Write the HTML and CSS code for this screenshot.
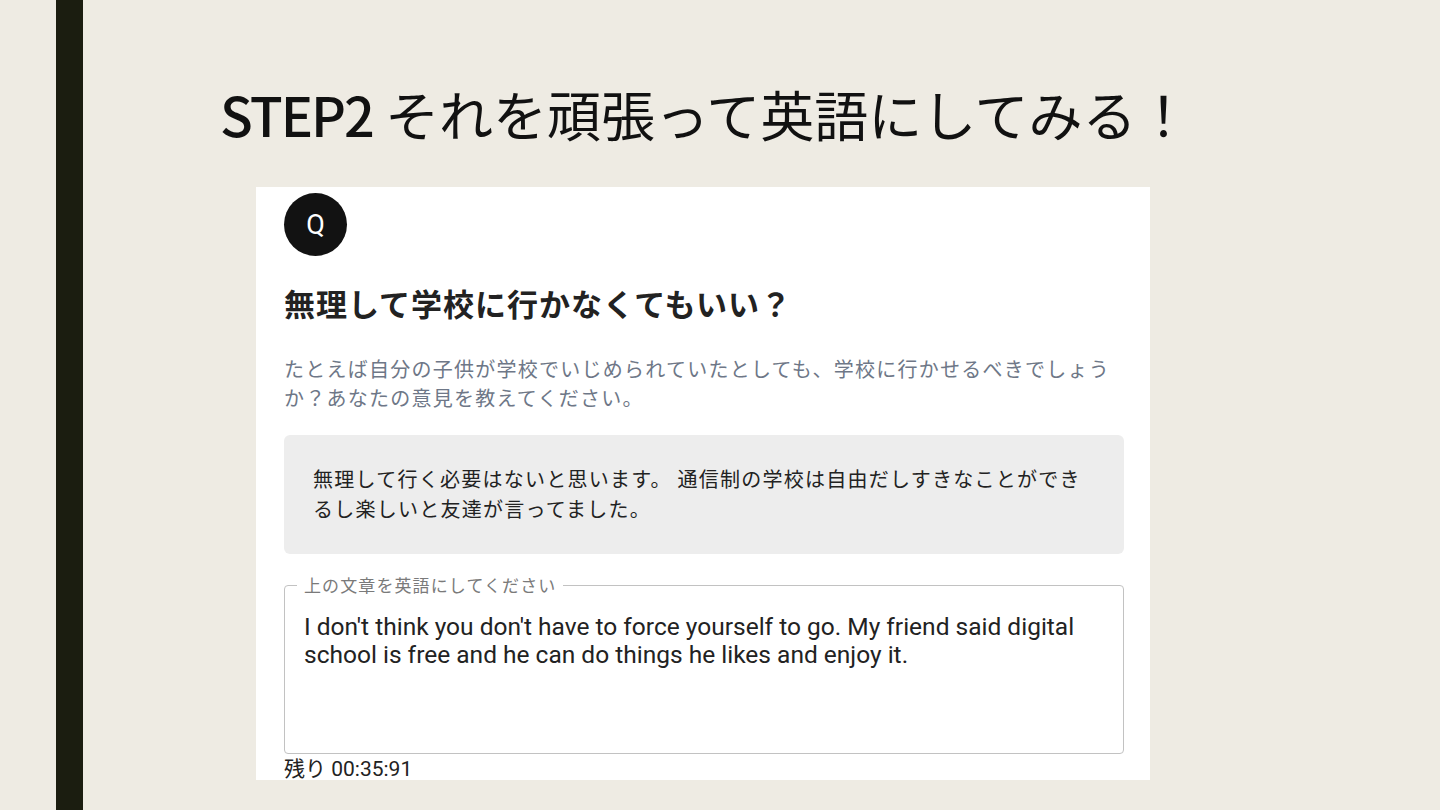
FILE: index.html
```html
<!DOCTYPE html>
<html lang="ja">
<head>
<meta charset="utf-8">
<title>STEP2</title>
<link rel="stylesheet" href="styles.css">
</head>
<body>
<div class="slide">
  <div class="bar"></div>
  <main class="content">
    <h1 class="title"><span class="step">STEP2</span> それを頑張って英語にしてみる！</h1>
    <section class="card">
      <div class="q-badge">Q</div>
      <h2 class="question">無理して学校に行かなくてもいい？</h2>
      <p class="desc">たとえば自分の子供が学校でいじめられていたとしても、学校に行かせるべきでしょうか？あなたの意見を教えてください。</p>
      <div class="answer">無理して行く必要はないと思います。 通信制の学校は自由だしすきなことができるし楽しいと友達が言ってました。</div>
      <fieldset class="field">
        <legend class="field-label">上の文章を英語にしてください</legend>
        <div class="field-text">I don't think you don't have to force yourself to go. My friend said digital school is free and he can do things he likes and enjoy it.</div>
      </fieldset>
      <div class="timer">残り 00:35:91</div>
    </section>
  </main>
</div>
</body>
</html>
```

FILE: styles.css
```css
html, body {
  margin: 0;
  padding: 0;
}
body {
  background: #eeebe3;
  font-family: "Roboto", "Noto Sans CJK JP", sans-serif;
  color: #222;
}
.slide {
  display: flex;
  width: 1440px;
  height: 810px;
  overflow: hidden;
}
.bar {
  width: 27px;
  margin-left: 56px;
  background: #1b1d10;
  flex: none;
}
.content {
  flex: 1;
  display: flex;
  flex-direction: column;
}
.title {
  margin: 78px 0 0 137px;
  font-family: "Noto Sans CJK JP", sans-serif;
  font-weight: 400;
  font-size: 54px;
  line-height: 72px;
  color: #111;
  letter-spacing: 0;
  white-space: nowrap;
}
.step {
  font-weight: 500;
  letter-spacing: -2px;
}
.card {
  margin: 37px 0 0 173px;
  width: 894px;
  height: 593px;
  box-sizing: border-box;
  background: #fff;
  padding: 6px 26px 0 28px;
  overflow: hidden;
}
.q-badge {
  width: 63px;
  height: 63px;
  border-radius: 50%;
  background: #121212;
  color: #fff;
  display: flex;
  align-items: center;
  justify-content: center;
  font-size: 27px;
  font-weight: 400;
  font-family: "Roboto", sans-serif;
}
.question {
  margin: 27px 0 0;
  font-family: "Noto Sans CJK JP", sans-serif;
  font-weight: 700;
  font-size: 31px;
  line-height: 40px;
  letter-spacing: 1px;
  color: #222;
}
.desc {
  margin: 31px 0 0;
  font-family: "Noto Sans CJK JP", sans-serif;
  font-size: 20px;
  line-height: 29px;
  letter-spacing: 1.25px;
  color: #6e7787;
}
.answer {
  margin-top: 23px;
  background: #ededed;
  border-radius: 6px;
  height: 119px;
  box-sizing: border-box;
  padding: 29px 36px 0 29px;
  font-family: "Noto Sans CJK JP", sans-serif;
  font-size: 20px;
  line-height: 30px;
  letter-spacing: 1.25px;
  color: #222;
}
.field {
  margin: 21px 0 0;
  padding: 0 19px 0 19px;
  border: 1px solid #c2c2c2;
  border-radius: 4px;
  min-width: 0;
}
.field-label {
  margin-left: -7px;
  padding: 0 7px;
  font-family: "Noto Sans CJK JP", sans-serif;
  font-size: 17px;
  line-height: 20px;
  letter-spacing: 1.1px;
  color: #7a7a7a;
}
.field-text {
  padding-top: 18px;
  height: 158px;
  box-sizing: border-box;
  font-family: "Roboto", sans-serif;
  font-size: 24.5px;
  line-height: 28px;
  color: #222;
}
.timer {
  margin-top: 4px;
  font-size: 21px;
  line-height: 22px;
  color: #222;
}
```
